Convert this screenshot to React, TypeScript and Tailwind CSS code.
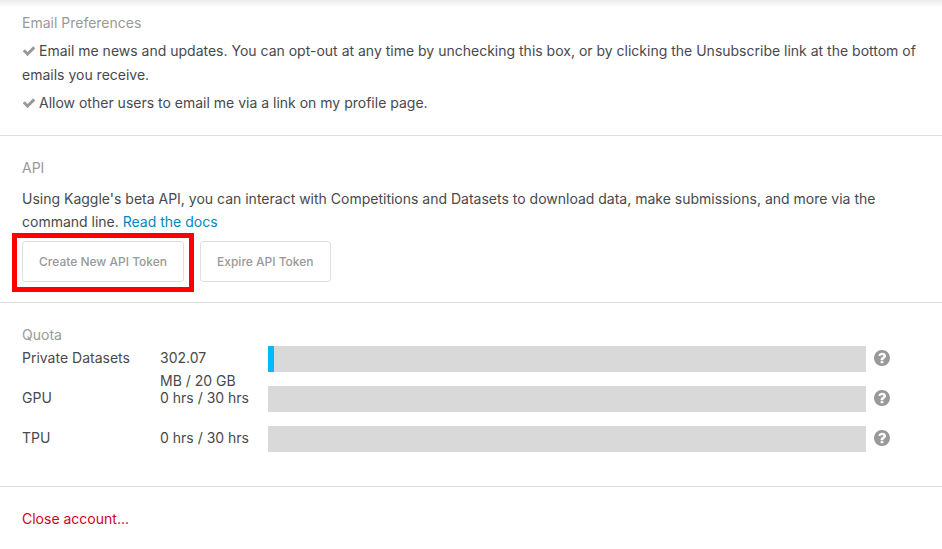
import type { ReactNode } from "react";

function CheckIcon() {
  return (
    <svg viewBox="0 0 1792 1792" className="mr-[3px] inline-block size-[14px] align-[-2px] fill-[#999]" aria-hidden="true">
      <path d="M1671 566q0 40-28 68l-724 724-136 136q-28 28-68 28t-68-28l-136-136-362-362q-28-28-28-68t28-68l136-136q28-28 68-28t68 28l294 295 656-657q28-28 68-28t68 28l136 136q28 28 28 68z" />
    </svg>
  );
}

function HelpIcon() {
  return (
    <svg viewBox="128 128 1536 1536" className="size-4 fill-[#999]" aria-hidden="true">
      <path d="M1024 1376v-192q0-14-9-23t-23-9h-192q-14 0-23 9t-9 23v192q0 14 9 23t23 9h192q14 0 23-9t9-23zm256-672q0-88-55.500-163t-138.500-116-170-41q-243 0-371 213-15 24 8 42l132 100q7 6 19 6 16 0 25-12 53-68 86-92 34-24 86-24 48 0 85.500 26t37.500 59q0 38-20 61t-68 45q-63 28-115.500 86.500t-52.500 125.500v36q0 14 9 23t23 9h192q14 0 23-9t9-23q0-19 21.500-49.500t54.500-49.500q32-18 49-28.500t46-35 44.500-48 28-60.500 12.500-81zm384 192q0 209-103 385.500t-279.500 279.500-385.500 103-385.500-103-279.500-279.500-103-385.500 103-385.500 279.500-279.500 385.500-103 385.500 103 279.500 279.500 103 385.500z" />
    </svg>
  );
}

function Preference({ id, children }: { id: string; children: ReactNode }) {
  return (
    <div className="relative leading-6">
      <input id={id} type="checkbox" defaultChecked className="peer sr-only" />
      <label htmlFor={id} className="block cursor-pointer">
        <CheckIcon />
        {children}
      </label>
    </div>
  );
}

function Heading({ children }: { children: ReactNode }) {
  return <h2 className="leading-[23px] text-[#999]">{children}</h2>;
}

const quotas = [
  { name: "Private Datasets", usage: "302.07 MB\u00a0/\u00a020\u00a0GB", percent: 1 },
  { name: "GPU", usage: "0 hrs / 30 hrs", percent: 0 },
  { name: "TPU", usage: "0 hrs / 30 hrs", percent: 0 },
];

const buttonClass =
  "h-[41px] rounded-[3px] border border-[#dedfe0] bg-white px-4 text-xs font-medium text-[#999]";

export default function App() {
  return (
    <main className="bg-white font-['Inter','Liberation_Sans',sans-serif] text-sm leading-[23px] text-[#47494d]">
      <div className="h-[7px] bg-linear-to-b from-[#ebebeb] to-white" />

      <section className="border-b border-[#dedfe0] px-[22px] pt-1 pb-5">
        <Heading>Email Preferences</Heading>
        <div className="mt-[5px] flex flex-col gap-1">
          <Preference id="news">
            Email me news and updates. You can opt-out at any time by unchecking this box, or by
            clicking the Unsubscribe link at the bottom of emails you receive.
          </Preference>
          <Preference id="contact">
            Allow other users to email me via a link on my profile page.
          </Preference>
        </div>
      </section>

      <section className="border-b border-[#dedfe0] px-[22px] py-5">
        <Heading>API</Heading>
        <p className="mt-2">
          Using Kaggle's beta API, you can interact with Competitions and Datasets to download
          data, make submissions, and more via the command line.{" "}
          <a href="#docs" className="text-[#008abc]">
            Read the docs
          </a>
        </p>
        <div className="mt-2 flex gap-4">
          <div className="relative">
            <button type="button" className={buttonClass}>
              Create New API Token
            </button>
            <div className="pointer-events-none absolute -inset-x-[10px] -top-2 -bottom-[10px] border-5 border-[#f00]" />
          </div>
          <button type="button" className={buttonClass}>
            Expire API Token
          </button>
        </div>
      </section>

      <section className="border-b border-[#dedfe0] px-[22px] py-5">
        <Heading>Quota</Heading>
        {quotas.map((quota) => (
          <div key={quota.name} className="flex h-10 items-start">
            <div className="w-[138px] shrink-0">{quota.name}</div>
            <div className="w-[108px] shrink-0 pr-4">{quota.usage}</div>
            <div className="h-[26px] flex-1 bg-[#d9d9d9]">
              <div className="h-full bg-[#00b9ff]" style={{ width: `${quota.percent}%` }} />
            </div>
            <button
              type="button"
              aria-label={`About ${quota.name} quota`}
              className="mt-1 mr-[30px] ml-2"
            >
              <HelpIcon />
            </button>
          </div>
        ))}
      </section>

      <section className="px-[22px] py-5">
        <a href="#close" className="text-[#d0021b]">
          Close account...
        </a>
      </section>
    </main>
  );
}
